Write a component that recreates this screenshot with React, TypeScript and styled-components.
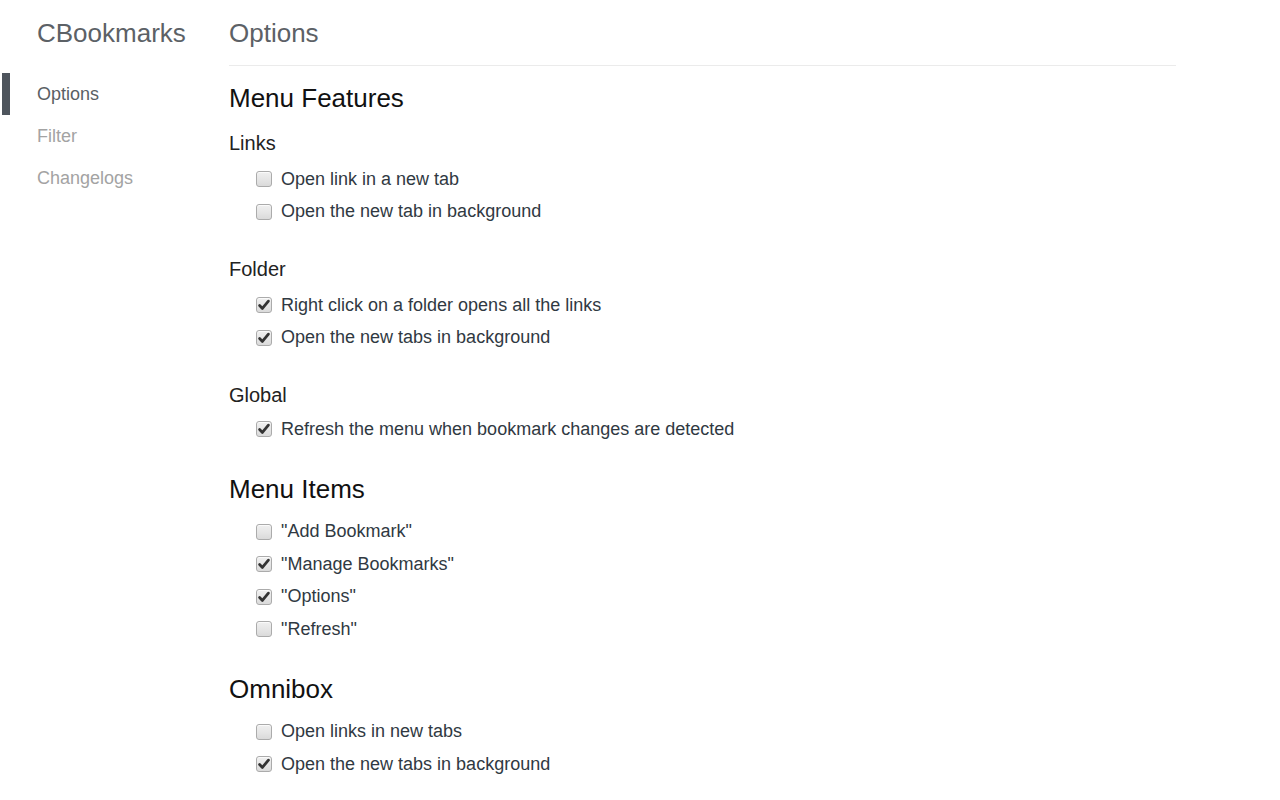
import React from 'react';
import styled, { createGlobalStyle } from 'styled-components';

type Option = { label: string; checked: boolean };
type Group = { title?: string; options: Option[] };
type Section = { title: string; groups: Group[] };

const sections: Section[] = [
  {
    title: 'Menu Features',
    groups: [
      {
        title: 'Links',
        options: [
          { label: 'Open link in a new tab', checked: false },
          { label: 'Open the new tab in background', checked: false },
        ],
      },
      {
        title: 'Folder',
        options: [
          { label: 'Right click on a folder opens all the links', checked: true },
          { label: 'Open the new tabs in background', checked: true },
        ],
      },
      {
        title: 'Global',
        options: [
          { label: 'Refresh the menu when bookmark changes are detected', checked: true },
        ],
      },
    ],
  },
  {
    title: 'Menu Items',
    groups: [
      {
        options: [
          { label: '"Add Bookmark"', checked: false },
          { label: '"Manage Bookmarks"', checked: true },
          { label: '"Options"', checked: true },
          { label: '"Refresh"', checked: false },
        ],
      },
    ],
  },
  {
    title: 'Omnibox',
    groups: [
      {
        options: [
          { label: 'Open links in new tabs', checked: false },
          { label: 'Open the new tabs in background', checked: true },
        ],
      },
    ],
  },
];

const navItems = ['Options', 'Filter', 'Changelogs'];

const Checkbox: React.FC<{ checked: boolean }> = ({ checked }) => (
  <Box>
    {checked && (
      <svg width="14" height="14" viewBox="0 0 14 14">
        <path
          d="M2.6 7.6 L5.4 10.4 L11.4 3.2"
          fill="none"
          stroke="#333"
          strokeWidth="2.8"
          strokeLinecap="round"
          strokeLinejoin="round"
        />
      </svg>
    )}
  </Box>
);

const App: React.FC = () => {
  const [state, setState] = React.useState(sections);

  const toggle = (s: number, g: number, o: number) => {
    setState(prev =>
      prev.map((sec, si) =>
        si !== s
          ? sec
          : {
              ...sec,
              groups: sec.groups.map((grp, gi) =>
                gi !== g
                  ? grp
                  : {
                      ...grp,
                      options: grp.options.map((opt, oi) =>
                        oi !== o ? opt : { ...opt, checked: !opt.checked }
                      ),
                    }
              ),
            }
      )
    );
  };

  return (
    <Page>
      <GlobalStyle />
      <Sidebar>
        <BrandTitle>CBookmarks</BrandTitle>
        <Nav>
          {navItems.map((item, i) => (
            <NavItem key={item} $active={i === 0}>
              {item}
            </NavItem>
          ))}
        </Nav>
      </Sidebar>

      <Main>
        <Header>
          <PageTitle>Options</PageTitle>
        </Header>

        {state.map((sec, si) => (
          <SectionBlock key={sec.title}>
            <SectionTitle>{sec.title}</SectionTitle>
            {sec.groups.map((grp, gi) => {
              const titled = !!grp.title;
              // the single-row group at the end of a section sits a bit tighter
              const tight = titled && gi > 0 && gi === sec.groups.length - 1;
              return (
                <GroupBlock key={gi} $titled={titled}>
                  {grp.title && <GroupTitle>{grp.title}</GroupTitle>}
                  <OptionList $titled={titled} $tight={tight}>
                    {grp.options.map((opt, oi) => (
                      <OptionRow key={opt.label} onClick={() => toggle(si, gi, oi)}>
                        <Checkbox checked={opt.checked} />
                        <span>{opt.label}</span>
                      </OptionRow>
                    ))}
                  </OptionList>
                </GroupBlock>
              );
            })}
          </SectionBlock>
        ))}
      </Main>
    </Page>
  );
};

// Styled Components
const GlobalStyle = createGlobalStyle`
  html, body {
    margin: 0;
    padding: 0;
    background: #fff;
  }

  body {
    font-family: "Liberation Sans", Arial, sans-serif;
    color: #303942;
  }
`;

const Page = styled.div`
  display: flex;
  align-items: flex-start;
  min-height: 800px;
`;

const Sidebar = styled.aside`
  width: 229px;
  flex-shrink: 0;
  display: flex;
  flex-direction: column;
  padding-top: 18px;
`;

const BrandTitle = styled.h1`
  margin: 0 0 25px 37px;
  font-size: 26px;
  line-height: 30px;
  font-weight: normal;
  color: #5c6166;
`;

const Nav = styled.ul`
  list-style: none;
  margin: 0;
  padding: 0;
`;

const NavItem = styled.li<{ $active?: boolean }>`
  height: 42px;
  line-height: 42px;
  margin-left: 2px;
  padding-left: 27px;
  border-left: 8px solid ${p => (p.$active ? '#4e555d' : 'transparent')};
  font-size: 18px;
  color: ${p => (p.$active ? '#5a5f64' : '#a3a3a3')};
  cursor: pointer;
`;

const Main = styled.main`
  width: 947px;
  display: flex;
  flex-direction: column;
  padding-top: 18px;
`;

const Header = styled.header`
  padding-bottom: 17px;
  border-bottom: 1px solid #ebebeb;
`;

const PageTitle = styled.h1`
  margin: 0;
  font-size: 26px;
  line-height: 30px;
  font-weight: normal;
  color: #5c6166;
`;

const SectionBlock = styled.section`
  display: flex;
  flex-direction: column;
  padding-top: 28px;

  &:first-of-type {
    padding-top: 17px;
  }
`;

const SectionTitle = styled.h3`
  margin: 0;
  font-size: 26px;
  line-height: 30px;
  font-weight: normal;
  color: #111;
`;

const GroupBlock = styled.div<{ $titled: boolean }>`
  display: flex;
  flex-direction: column;
  padding-top: ${p => (p.$titled ? '29px' : '0')};

  &:nth-child(2) {
    padding-top: ${p => (p.$titled ? '18px' : '0')};
  }
`;

const GroupTitle = styled.h4`
  margin: 0;
  font-size: 20px;
  line-height: 24px;
  font-weight: normal;
  color: #222;
`;

const OptionList = styled.div<{ $titled: boolean; $tight?: boolean }>`
  display: flex;
  flex-direction: column;
  margin-top: ${p => (p.$tight ? '6px' : p.$titled ? '8px' : '12px')};
`;

const OptionRow = styled.label`
  display: flex;
  align-items: center;
  gap: 9px;
  height: 32.5px;
  padding-left: 27px;
  font-size: 18px;
  color: #303942;
  cursor: pointer;
  user-select: none;
`;

const Box = styled.span`
  width: 16px;
  height: 16px;
  box-sizing: border-box;
  flex-shrink: 0;
  display: flex;
  align-items: center;
  justify-content: center;
  border: 1px solid #ababab;
  border-radius: 3px;
  background: linear-gradient(#f0f0f0, #e4e4e4 60%, #dadada);
  box-shadow: inset 0 1px 0 rgba(255, 255, 255, 0.7);
`;

export default App;
